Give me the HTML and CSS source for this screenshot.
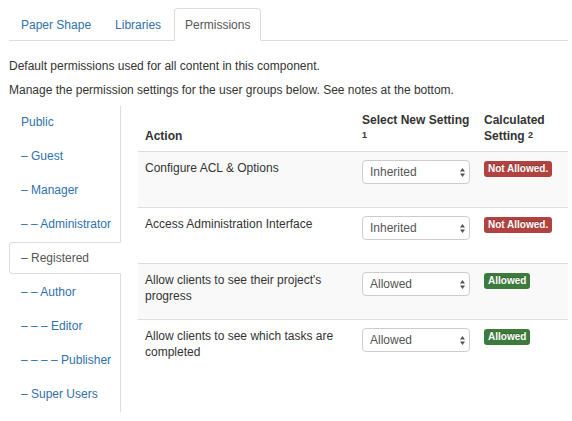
FILE: index.html
```html
<!DOCTYPE html>
<html lang="en">
<head>
<meta charset="utf-8">
<title>Permissions</title>
<link rel="stylesheet" href="styles.css">
</head>
<body>
<div class="page">
  <ul class="tabs">
    <li><a href="#">Paper Shape</a></li>
    <li><a href="#">Libraries</a></li>
    <li class="active"><a href="#">Permissions</a></li>
  </ul>
  <div class="desc">
    <p>Default permissions used for all content in this component.</p>
    <p>Manage the permission settings for the user groups below. See notes at the bottom.</p>
  </div>
  <div class="perm">
    <ul class="groups">
      <li><a href="#">Public</a></li>
      <li><a href="#">– Guest</a></li>
      <li><a href="#">– Manager</a></li>
      <li><a href="#">– – Administrator</a></li>
      <li class="active"><a href="#">– Registered</a></li>
      <li><a href="#">– – Author</a></li>
      <li><a href="#">– – – Editor</a></li>
      <li><a href="#">– – – – Publisher</a></li>
      <li><a href="#">– Super Users</a></li>
    </ul>
    <table class="rules">
      <colgroup><col class="c-action"><col class="c-select"><col class="c-calc"></colgroup>
      <thead>
        <tr>
          <th>Action</th>
          <th class="th-select"><span class="nowrap">Select New Setting</span> <sup>1</sup></th>
          <th><span>Calculated</span> <span>Setting</span> <sup>2</sup></th>
        </tr>
      </thead>
      <tbody>
        <tr>
          <td>Configure ACL &amp; Options</td>
          <td class="td-select"><div class="select-wrap"><select class="select"><option>Inherited</option><option>Allowed</option><option>Denied</option></select><svg class="caret" width="5" height="9" viewBox="0 0 5 9"><path d="M0 3.5L2.5 0L5 3.5Z M0 5.5L2.5 9L5 5.5Z" fill="#555"/></svg></div></td>
          <td><span class="badge badge-no">Not Allowed.</span></td>
        </tr>
        <tr>
          <td>Access Administration Interface</td>
          <td class="td-select"><div class="select-wrap"><select class="select"><option>Inherited</option><option>Allowed</option><option>Denied</option></select><svg class="caret" width="5" height="9" viewBox="0 0 5 9"><path d="M0 3.5L2.5 0L5 3.5Z M0 5.5L2.5 9L5 5.5Z" fill="#555"/></svg></div></td>
          <td><span class="badge badge-no">Not Allowed.</span></td>
        </tr>
        <tr>
          <td>Allow clients to see their project's progress</td>
          <td class="td-select"><div class="select-wrap"><select class="select"><option>Allowed</option><option>Inherited</option><option>Denied</option></select><svg class="caret" width="5" height="9" viewBox="0 0 5 9"><path d="M0 3.5L2.5 0L5 3.5Z M0 5.5L2.5 9L5 5.5Z" fill="#555"/></svg></div></td>
          <td><span class="badge badge-yes">Allowed</span></td>
        </tr>
        <tr>
          <td>Allow clients to see which tasks are completed</td>
          <td class="td-select"><div class="select-wrap"><select class="select"><option>Allowed</option><option>Inherited</option><option>Denied</option></select><svg class="caret" width="5" height="9" viewBox="0 0 5 9"><path d="M0 3.5L2.5 0L5 3.5Z M0 5.5L2.5 9L5 5.5Z" fill="#555"/></svg></div></td>
          <td><span class="badge badge-yes">Allowed</span></td>
        </tr>
      </tbody>
    </table>
  </div>
</div>
</body>
</html>
```

FILE: styles.css
```css
* { box-sizing: border-box; }
html, body { margin: 0; padding: 0; background: #fff; }
body {
  font-family: "Liberation Sans", Arial, Helvetica, sans-serif;
  font-size: 12px;
  line-height: 18px;
  color: #333;
}
a { text-decoration: none; }

.page { padding: 8px 4px 0 9px; }

/* top tabs */
.tabs {
  list-style: none;
  margin: 0;
  padding: 0;
  display: flex;
  border-bottom: 1px solid #ddd;
}
.tabs li { margin: 0 2px -1px 0; }
.tabs a {
  display: block;
  padding: 9px 10px 7px;
  line-height: 15px;
  border: 1px solid transparent;
  border-radius: 4px 4px 0 0;
  color: #3071a9;
}
.tabs li:first-child a { padding-left: 11px; }
.tabs .active a {
  color: #555;
  background: #fff;
  border-color: #ddd #ddd transparent;
}

.desc { padding-top: 16px; }
.desc p { margin: 0 0 6px; }
.desc p:last-child { margin-bottom: 0; }

/* permissions area */
.perm {
  display: flex;
  align-items: flex-start;
  margin-top: 7px;
}
.groups {
  list-style: none;
  margin: 0 17px 0 0;
  padding: 0;
  width: 112px;
  flex: none;
  border-right: 1px solid #ddd;
}
.groups a {
  display: block;
  margin: 0 -1px 2px 0;
  padding: 7px 11px;
  line-height: 16px;
  border: 1px solid transparent;
  border-radius: 4px 0 0 4px;
  color: #3071a9;
  white-space: nowrap;
}
.groups .active a {
  color: #555;
  background: #fff;
  border-color: #ddd transparent #ddd #ddd;
}

.rules {
  flex: 1;
  border-collapse: separate;
  border-spacing: 0;
  table-layout: fixed;
}
.c-action { width: 216px; }
.c-select { width: 123px; }
.c-calc { width: 91px; }
.rules th {
  text-align: left;
  vertical-align: bottom;
  font-weight: bold;
  line-height: 16px;
  padding: 6px 8px 7px 7px;
}
.rules sup {
  font-size: 9px;
  line-height: 0;
  vertical-align: 2px;
}
.nowrap { white-space: nowrap; }
.rules td {
  vertical-align: top;
  padding: 8px 8px 8px 7px;
  line-height: 16px;
  border-top: 1px solid #ddd;
  height: 56px;
}
.rules tbody tr:nth-child(odd) td { background: #f9f9f9; }
.rules .th-select, .rules .td-select { padding-left: 8px; padding-right: 7px; }

.select-wrap {
  position: relative;
  width: 108px;
  height: 24px;
}
.select {
  -webkit-appearance: none;
  appearance: none;
  display: block;
  width: 108px;
  height: 24px;
  margin: 0;
  padding: 0 16px 0 7px;
  border: 1px solid #ccc;
  border-radius: 4px;
  background: #fff;
  color: #555;
  font-family: inherit;
  font-size: 12px;
  line-height: 22px;
}
.caret {
  position: absolute;
  right: 5px;
  top: 8px;
  pointer-events: none;
}

.badge {
  display: inline-block;
  padding: 2px 4px;
  font-size: 10px;
  font-weight: bold;
  line-height: 12px;
  color: #fff;
  border-radius: 3px;
  text-shadow: 0 -1px 0 rgba(0, 0, 0, 0.25);
  white-space: nowrap;
}
.badge-no { background: #b0423f; }
.badge-yes { background: #3d7b3d; }
```
